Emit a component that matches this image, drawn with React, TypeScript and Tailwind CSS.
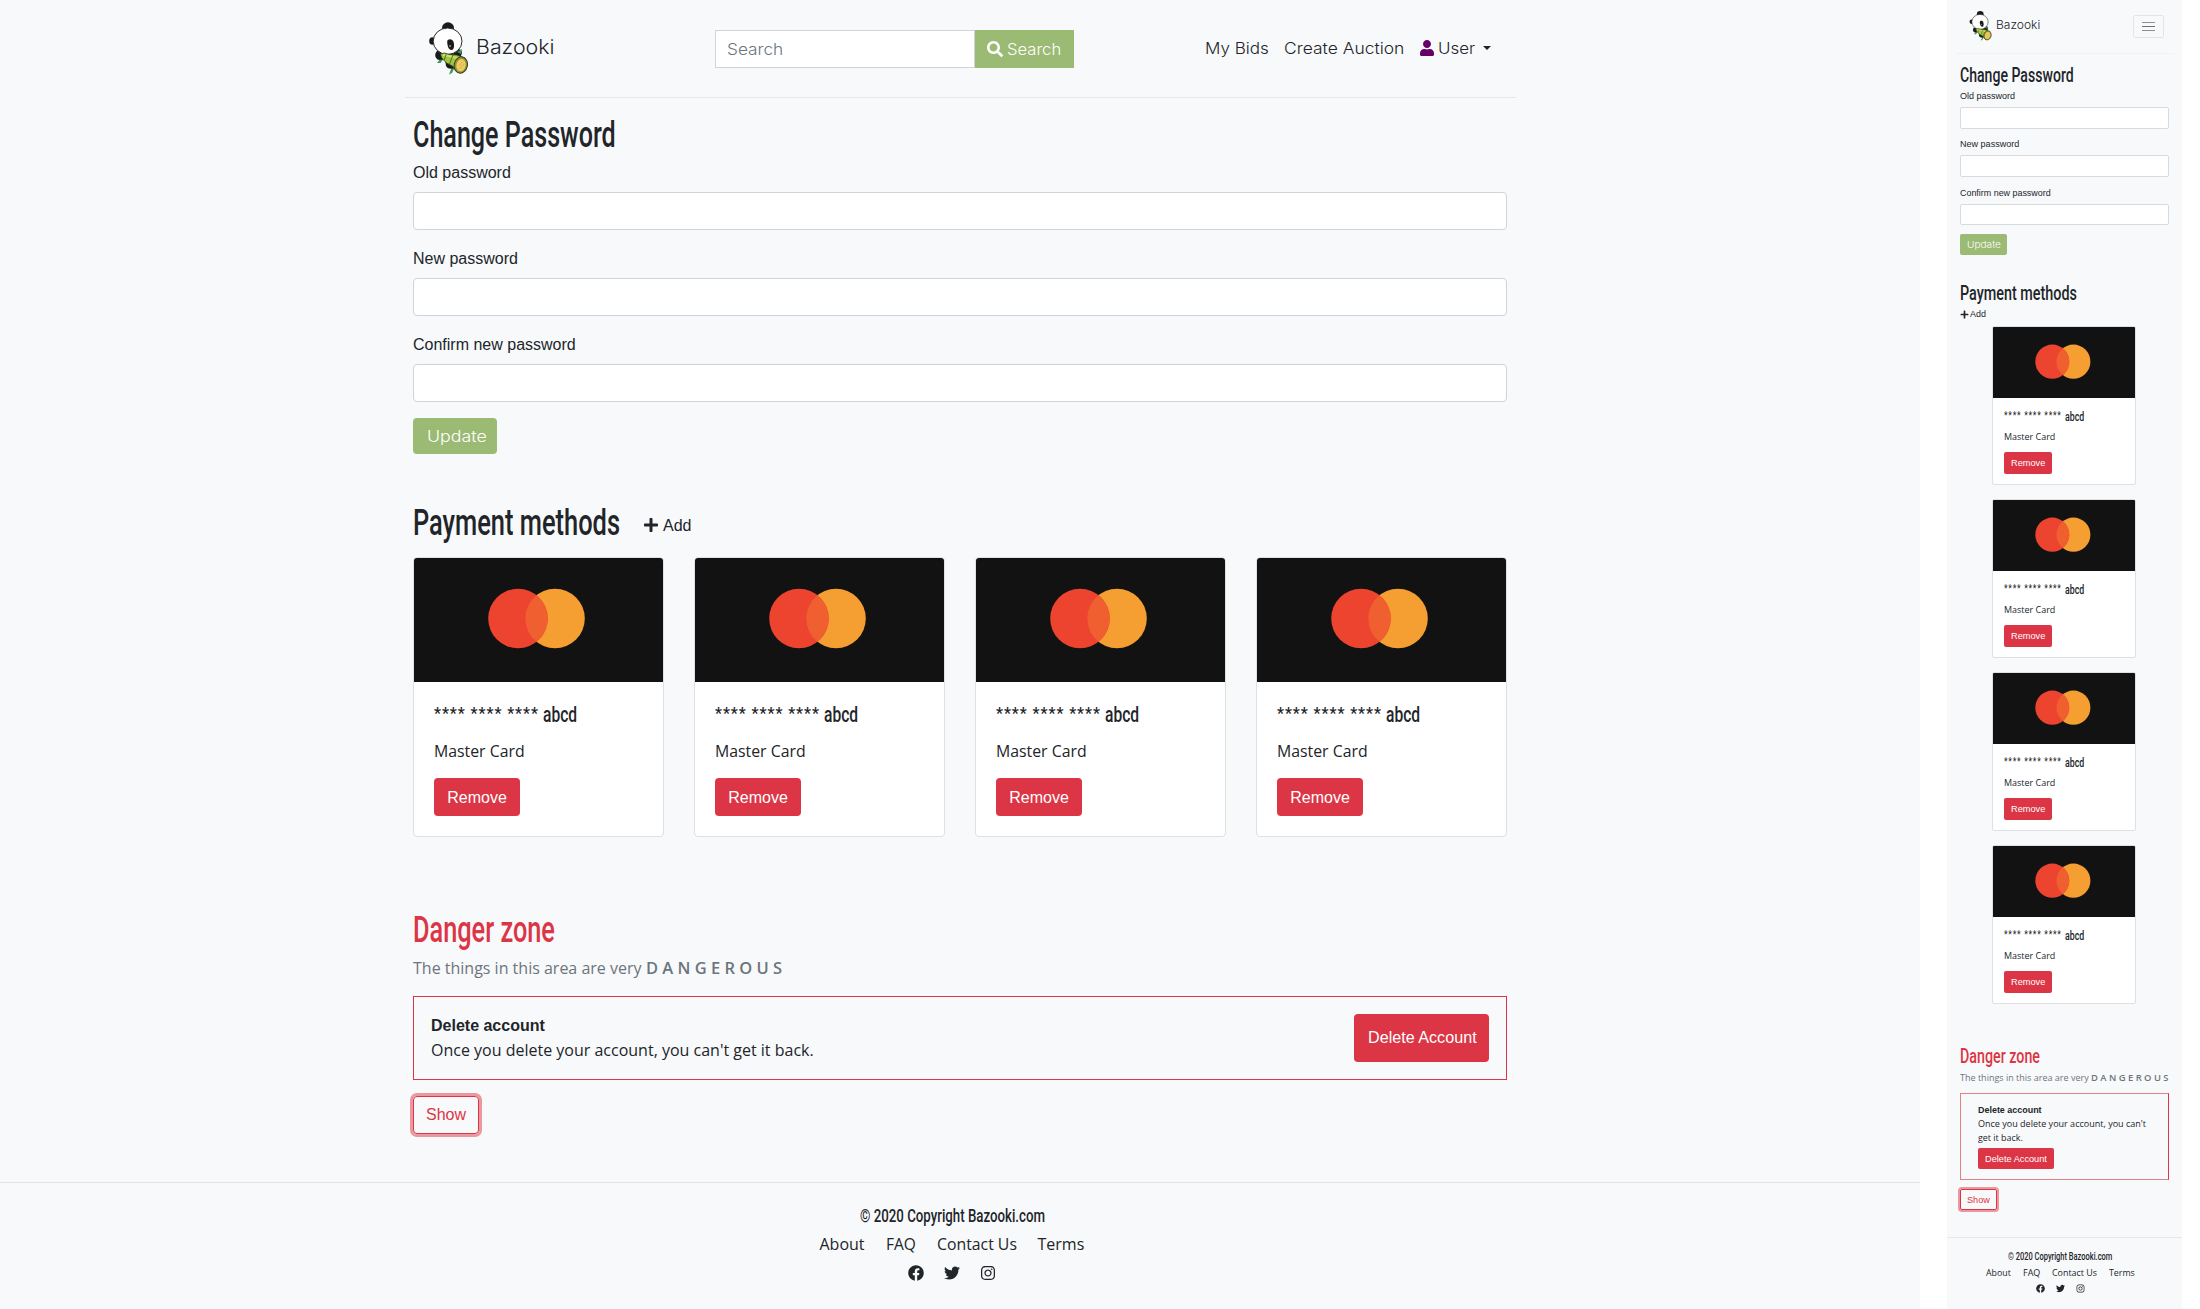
import { type ReactNode, useLayoutEffect, useRef, useState } from "react";
import { FaFacebook, FaInstagram, FaPlus, FaSearch, FaTwitter, FaUser } from "react-icons/fa";

const display = "font-['Roboto',sans-serif] font-medium";
const displayRegular = "font-['Roboto',sans-serif] font-normal";
const geo = "font-['Inter',sans-serif] font-light";
const open = "font-['Open_Sans',sans-serif]";

/** One line of text, stretched or condensed to a given width. */
function Fit({ w, className = "", children }: { w: number; className?: string; children: ReactNode }) {
  const ref = useRef<HTMLSpanElement>(null);
  const [scale, setScale] = useState(1);
  useLayoutEffect(() => {
    if (ref.current) setScale(w / ref.current.offsetWidth);
  }, [w]);
  return (
    <span className={`block shrink-0 whitespace-nowrap ${className}`} style={{ width: w }}>
      <span ref={ref} className="inline-block origin-left" style={{ transform: `scaleX(${scale})` }}>
        {children}
      </span>
    </span>
  );
}

function Panda({ className }: { className: string }) {
  return (
    <svg viewBox="0 0 39 53" className={className}>
      <ellipse cx="19" cy="6" rx="6" ry="5.800" fill="#1b1a1c" />
      <ellipse cx="3.400" cy="19" rx="3.200" ry="3.800" fill="#1b1a1c" />
      <path d="M24 42l-4 10.500 3-1.500 4-8zM12 36l-4 5 3.500 0 3-4z" fill="#3c9a5c" />
      <path d="M8 29c-3 3-2 8 2 9l6-1 1 7c2 4 8 3 11 1l5-14c0-4-4-5-8-3z" fill="#1b1a1c" />
      <path d="M28 30l5-3-1 5z" fill="#3c9a5c" />
      <ellipse cx="18.600" cy="19.200" rx="14.400" ry="13.200" fill="#fff" stroke="#2b292b" strokeWidth="1" />
      <path d="M18.200 20c-.3-3.600 5-3.800 6.300-.3 1 3 .8 8.300-1.900 8.300-3.200 0-4.200-4.300-4.400-8z" fill="#1b1a1c" />
      <circle cx="21" cy="24" r=".8" fill="#e8e8e8" />
      <path d="M11.500 32l4-1 5 1.500 7 .5 8.500 3-7 15-5.500-7-6-3-5-5.500z" fill="#a3c544" stroke="#33431f" strokeWidth=".8" />
      <path d="M14 33l8 1.500 8 2" stroke="#cfe06a" strokeWidth="1.800" fill="none" />
      <path d="M17.500 31.500l-2.500 7M24 33l-3.500 9" stroke="#4f7427" strokeWidth="1" />
      <ellipse cx="31.800" cy="43" rx="6.600" ry="8.200" transform="rotate(12 31.800 43)" fill="#93962f" stroke="#3a3a1c" strokeWidth="1" />
      <ellipse cx="32" cy="43.200" rx="4.600" ry="6.200" transform="rotate(12 32 43.200)" fill="#eccb62" />
      <path d="M30 44l4-4.500M31 47l4-5" stroke="#d9a94a" strokeWidth=".8" />
    </svg>
  );
}

function CardArt({ className }: { className: string }) {
  return (
    <svg viewBox="0 0 249 124" preserveAspectRatio="none" className={className}>
      <rect width="249" height="124" fill="#121212" />
      <circle cx="141" cy="60.500" r="29.800" fill="#f59e31" />
      <circle cx="104" cy="60.500" r="29.800" fill="#ed4430" />
      <path d="M122.500 37.200a29.800 29.800 0 0 1 0 46.600a29.800 29.800 0 0 1 0-46.600z" fill="#ef5f2f" />
    </svg>
  );
}

function Field({ label, w }: { label: string; w: number }) {
  return (
    <label className="mb-4 block">
      <Fit w={w} className="mb-2 h-6 leading-[26px]">{label}</Fit>
      <span className="block h-[38px] rounded border border-[#ced4da] bg-white" />
    </label>
  );
}

function Card() {
  return (
    <div className="h-[280px] overflow-hidden rounded border border-[#dfe0e2] bg-white">
      <CardArt className="block h-[124px] w-full" />
      <div className="pt-[21px] pl-5">
        <div className={`flex h-6 gap-1 text-[22px] leading-6 ${display}`}>
          <Fit w={105} className="text-[17px] leading-5 tracking-[1px]">**** **** ****</Fit>
          <Fit w={34}>abcd</Fit>
        </div>
        <Fit w={91} className={`mt-3 h-6 leading-6 ${open}`}>Master Card</Fit>
        <button className="mt-[15px] flex h-[38px] w-[86px] items-center justify-center rounded bg-[#dc3545] text-white">
          <Fit w={60} className="pt-px">Remove</Fit>
        </button>
      </div>
    </div>
  );
}

function Desktop() {
  return (
    <div className="h-[1309px] w-[1920px] bg-[#f8f9fb] text-base text-[#212529]">
      <header className="mx-auto flex h-[98px] w-[1111px] border-b border-[#e6e8ea] pl-6">
        <Panda className="mt-[22px] h-[53px] w-[39px]" />
        <Fit w={78} className={`mt-8 ml-2 text-[20px] leading-[30px] ${geo}`}>Bazooki</Fit>
        <div className="mt-[30px] ml-[161px] flex h-[38px]">
          <div className="flex w-[260px] items-center border border-[#ced4da] bg-white pl-[11px] text-[#6c757d]">
            <Fit w={56} className={geo}>Search</Fit>
          </div>
          <button className="flex w-[99px] items-center bg-[#9bba73] pl-3 text-white">
            <FaSearch className="mr-1 size-4" />
            <Fit w={54} className={geo}>Search</Fit>
          </button>
        </div>
        <nav className={`mt-[36px] ml-[131px] flex h-6 items-start leading-6 ${geo}`}>
          <Fit w={64}>My Bids</Fit>
          <Fit w={120} className="ml-[15px]">Create Auction</Fit>
          <FaUser className="mt-1 ml-4 h-4 w-[14px] text-[#660066]" />
          <Fit w={37} className="ml-1">User</Fit>
          <span className="mt-[10px] ml-2 border-x-4 border-t-4 border-x-transparent border-t-[#212529]" />
        </nav>
      </header>
      <main className="mx-auto w-[1094px] font-['Liberation_Sans',sans-serif]">
        <Fit w={203} className={`mt-[18px] mb-[6px] h-[38px] text-[36px] leading-[38px] ${display}`}>Change Password</Fit>
        <Field label="Old password" w={98} />
        <Field label="New password" w={105} />
        <Field label="Confirm new password" w={163} />
        <button className="flex h-9 w-[84px] items-center justify-start rounded bg-[#9bba73] text-white">
          <Fit w={60} className={`ml-[11px] ${geo}`}>Update</Fit>
        </button>
        <div className="mt-[50px] mb-[15px] flex h-[38px]">
          <Fit w={207} className={`text-[36px] leading-[38px] ${display}`}>Payment methods</Fit>
          <FaPlus className="mt-[13px] ml-[23px] size-4" />
          <Fit w={28} className="mt-[10px] ml-1 leading-6">Add</Fit>
        </div>
        <div className="grid grid-cols-4 gap-[30px]">
          {[0, 1, 2, 3].map((i) => <Card key={i} />)}
        </div>
        <Fit w={142} className={`mt-[74px] h-[38px] text-[36px] leading-[38px] text-[#dc3545] ${display}`}>Danger zone</Fit>
        <div className={`mt-[7px] flex h-6 leading-6 text-[#6c757d] ${open}`}>
          <Fit w={229}>The things in this area are very</Fit>
          <Fit w={136} className="ml-1 font-semibold">D A N G E R O U S</Fit>
        </div>
        <section className="mt-4 flex h-[84px] justify-between border border-[#dc3545] px-[17px] py-[17px]">
          <div>
            <Fit w={114} className="h-6 font-bold leading-6">Delete account</Fit>
            <Fit w={383} className={`h-6 leading-6 ${open}`}>Once you delete your account, you can't get it back.</Fit>
          </div>
          <button className="flex h-12 w-[135px] items-center justify-center rounded bg-[#dc3545] text-white">
            <Fit w={109}>Delete Account</Fit>
          </button>
        </section>
        <button className="mt-4 flex h-[38px] w-[66px] items-center justify-center rounded border border-[#dc3545] text-[#dc3545] ring-3 ring-[#dc3545]/50">
          <Fit w={40}>Show</Fit>
        </button>
      </main>
      <footer className="mt-12 flex flex-col items-center border-t border-[#e3e5e8] pt-[21px] pr-4">
        <Fit w={185} className={`h-6 text-[19px] leading-6 ${display}`}>© 2020 Copyright Bazooki.com</Fit>
        <div className={`mt-1 flex h-6 gap-[21px] leading-6 ${open}`}>
          <Fit w={45}>About</Fit>
          <Fit w={30}>FAQ</Fit>
          <Fit w={80}>Contact Us</Fit>
          <Fit w={47}>Terms</Fit>
        </div>
        <div className="mt-[9px] flex gap-5">
          <FaFacebook className="size-4" />
          <FaTwitter className="size-4" />
          <FaInstagram className="size-4" />
        </div>
      </footer>
    </div>
  );
}

function SmallField({ label, w }: { label: string; w: number }) {
  return (
    <label className="mb-[8.800px] block">
      <Fit w={w} className="mb-1 h-[14px] leading-[14px]">{label}</Fit>
      <span className="block h-[21.600px] rounded-[2px] border border-[#d6dbe0] bg-white" />
    </label>
  );
}

function SmallCard() {
  return (
    <div className="mb-[14px] h-[159px] w-[144px] overflow-hidden rounded-[2px] border border-[#dfe0e2] bg-white">
      <CardArt className="block h-[71px] w-full" />
      <div className="pt-[12px] pl-[11px]">
        <div className={`flex h-[14px] gap-[3px] text-[12.500px] leading-[14px] ${displayRegular}`}>
          <Fit w={58} className="text-[10px] leading-3 tracking-[1px]">**** **** ****</Fit>
          <Fit w={19} className="font-medium">abcd</Fit>
        </div>
        <Fit w={51} className={`mt-[6px] h-[14px] leading-[14px] ${open}`}>Master Card</Fit>
        <button className="mt-2 flex h-[22px] w-12 items-center justify-center rounded-[2px] bg-[#dc3545] text-white">
          <Fit w={34}>Remove</Fit>
        </button>
      </div>
    </div>
  );
}

function Mobile() {
  return (
    <div className="ml-[27px] h-[1309px] w-[235px] bg-[#f8f9fb] text-[9.500px] text-[#212529]">
      <header className="mx-auto flex h-[54px] w-[218px] border-b border-[#f1f2f4] pl-[13px]">
        <Panda className="mt-[11px] h-[30px] w-[23px]" />
        <Fit w={44} className={`mt-[17px] ml-1 text-[11.500px] leading-4 ${geo}`}>Bazooki</Fit>
        <div className="mt-[15px] ml-[93px] flex h-[23px] w-[31px] flex-col items-center justify-center gap-[3px] rounded-[2px] border border-[#e3e5e7]">
          <span className="h-px w-[13px] bg-[#8d8f92]" />
          <span className="h-px w-[13px] bg-[#6f7174]" />
          <span className="h-px w-[13px] bg-[#8d8f92]" />
        </div>
      </header>
      <main className="mx-[13px] font-['Liberation_Sans',sans-serif]">
        <Fit w={114} className={`mt-[10px] mb-[3px] h-[22px] text-[20.500px] leading-[22px] ${display}`}>Change Password</Fit>
        <SmallField label="Old password" w={55} />
        <SmallField label="New password" w={59} />
        <SmallField label="Confirm new password" w={91} />
        <button className="flex h-[21px] w-[47px] items-center justify-start rounded-[2px] bg-[#9bba73] text-white">
          <Fit w={34} className={`ml-[6px] ${geo}`}>Update</Fit>
        </button>
        <Fit w={117} className={`mt-[27px] h-[22px] text-[20.500px] leading-[22px] ${display}`}>Payment methods</Fit>
        <div className="mt-[3px] mb-[5px] flex h-[14px] items-center">
          <FaPlus className="size-[9px]" />
          <Fit w={16} className="ml-px leading-[14px]">Add</Fit>
        </div>
        <div className="ml-8">
          {[0, 1, 2, 3].map((i) => <SmallCard key={i} />)}
        </div>
        <Fit w={80} className={`mt-[41px] h-[22px] text-[20.500px] leading-[22px] text-[#dc3545] ${display}`}>Danger zone</Fit>
        <div className={`mt-[4px] flex h-[14px] leading-[14px] text-[#6c757d] ${open}`}>
          <Fit w={129}>The things in this area are very</Fit>
          <Fit w={77} className="ml-[2px] font-semibold">D A N G E R O U S</Fit>
        </div>
        <section className="mt-2 h-[87px] border border-[#e08089] border-r-[#dc3545] pt-[9px] pl-[17px]">
          <Fit w={64} className="h-[14px] font-bold leading-[14px]">Delete account</Fit>
          <Fit w={168} className={`h-[14px] leading-[14px] ${open}`}>Once you delete your account, you can't</Fit>
          <Fit w={45} className={`h-[14px] leading-[14px] ${open}`}>get it back.</Fit>
          <button className="mt-[3px] flex h-[21px] w-[76px] items-center justify-center rounded-[2px] bg-[#dc3545] text-white">
            <Fit w={62}>Delete Account</Fit>
          </button>
        </section>
        <button className="mt-[9px] flex h-[21px] w-[37px] items-center justify-center rounded-[2px] border border-[#dc3545] text-[#dc3545] ring-2 ring-[#dc3545]/50">
          <Fit w={23}>Show</Fit>
        </button>
      </main>
      <footer className="mt-[27px] flex flex-col items-center border-t border-[#e6e8ea] pt-[12px] pr-[9px]">
        <Fit w={104} className={`h-[14px] text-[11px] leading-[14px] ${display}`}>© 2020 Copyright Bazooki.com</Fit>
        <div className={`mt-[2px] flex h-[14px] gap-[12px] leading-[14px] ${open}`}>
          <Fit w={25}>About</Fit>
          <Fit w={17}>FAQ</Fit>
          <Fit w={45}>Contact Us</Fit>
          <Fit w={26}>Terms</Fit>
        </div>
        <div className="mt-[4px] flex gap-[11px]">
          <FaFacebook className="size-[9px]" />
          <FaTwitter className="size-[9px]" />
          <FaInstagram className="size-[9px]" />
        </div>
      </footer>
    </div>
  );
}

export default function App() {
  return (
    <div className="flex h-[1309px] w-[2200px] overflow-hidden bg-white">
      <Desktop />
      <Mobile />
    </div>
  );
}
